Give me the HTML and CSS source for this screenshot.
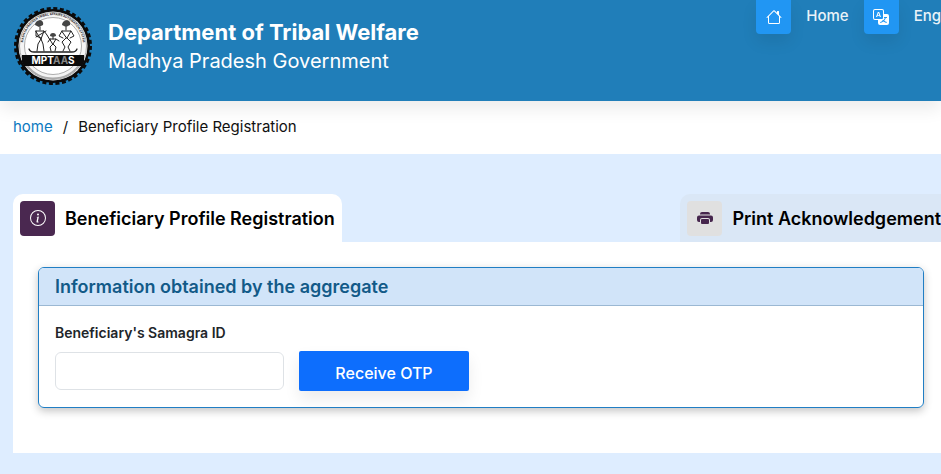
FILE: index.html
```html
<!DOCTYPE html>
<html lang="en">
<head>
<meta charset="utf-8">
<meta name="viewport" content="width=device-width, initial-scale=1">
<title>Beneficiary Profile Registration</title>
<link rel="stylesheet" href="styles.css">
</head>
<body>
<header class="site-header">
  <div class="brand">
    <svg class="logo" viewBox="0 0 80 80" role="img" aria-label="MPTAAS">
      <defs><path id="ring" d="M10.800 46A30 30 0 1 1 69.200 46"/></defs>
      <circle cx="40" cy="40" r="37" fill="#0b0b0b"/>
      <circle cx="40" cy="40" r="37.500" fill="none" stroke="#0b0b0b" stroke-width="3" stroke-dasharray="4 2.545"/>
      <circle cx="40" cy="40" r="34.500" fill="#f4f4f4"/>
      <circle cx="40" cy="40" r="33.500" fill="none" stroke="#777" stroke-width=".6"/>
      <circle cx="40" cy="40" r="28.500" fill="#fff" stroke="#999" stroke-width=".8"/>
      <path d="M14 59A32 32 0 0 0 66 59" fill="none" stroke="#aaa" stroke-width="1.500"/>
      <text class="logo-ring" text-anchor="middle"><textPath href="#ring" startOffset="50%">MADHYA PRADESH TRIBAL AFFAIRS AUTOMATION SYSTEM</textPath></text>
      <g fill="none" stroke="#222" stroke-width="1" stroke-linecap="round" stroke-linejoin="round">
        <path d="M16 43q1 3 5 3h38q4 0 5-3" stroke-width="1.300"/>
        <path d="M27 21v3M23 25l8 0-3 8zM23 25l0 5 5 2M31 25l3 4 3 5M28 33l-3 5-1 7M28 33l2 5 1 7M23 31l10-6"/>
        <path d="M53 21v3M49 25h9l-4 7zM49 25l-3 5 4 2M58 25l3 5-4 2M53 32l-4 4 3 5-2 4M54 32l4 4-3 5 2 4"/>
        <path d="M40 31v2M37 33h6l-3 5zM37 33l-2 3M43 33l3 2M40 38l-3 3 1 4M40 38l3 3-1 4"/>
      </g>
      <g fill="#444">
        <path d="M22 19q0-4 5-5 4 1 3 5l-4 2z"/>
        <path d="M49 19q0-4 5-5 4 1 3 5l-4 2z"/>
        <path d="M37 30q0-3 3-3t3 3l-3 1z"/>
      </g>
      <path d="M9 49h62v7l-2 4H11l-2-4z" fill="#0b0b0b"/>
      <text class="logo-name" x="40" y="58" text-anchor="middle">MPT<tspan fill="#858585">AA</tspan>S</text>
    </svg>
    <div class="brand-text">
      <h1 class="dept">Department of Tribal Welfare</h1>
      <p class="gov">Madhya Pradesh Government</p>
    </div>
  </div>
  <nav class="top-nav">
    <a class="nav-link" href="#">
      <span class="nav-icon"><svg class="icon" viewBox="0 0 16 16" aria-hidden="true"><path d="M8.707 1.500a1 1 0 0 0-1.414 0L.646 8.146a.5.5 0 0 0 .708.708L2 8.207V13.500A1.500 1.500 0 0 0 3.500 15h9a1.500 1.500 0 0 0 1.500-1.500V8.207l.646.647a.5.5 0 0 0 .708-.708L13 5.793V2.500a.5.5 0 0 0-.5-.5h-1a.5.5 0 0 0-.5.5v1.293zM13 7.207V13.500a.5.5 0 0 1-.5.5h-9a.5.5 0 0 1-.5-.5V7.207l5-5z"/></svg></span>
      Home
    </a>
    <a class="nav-link" href="#">
      <span class="nav-icon"><svg class="icon" viewBox="0 0 16 16" aria-hidden="true"><path d="M4.545 6.714 4.110 8H3l1.862-5h1.284L8 8H6.833l-.435-1.286zm1.634-.736L5.500 3.956h-.049l-.679 2.022z"/><path d="M0 2a2 2 0 0 1 2-2h7a2 2 0 0 1 2 2v3h3a2 2 0 0 1 2 2v7a2 2 0 0 1-2 2H7a2 2 0 0 1-2-2v-3H2a2 2 0 0 1-2-2zm2-1a1 1 0 0 0-1 1v7a1 1 0 0 0 1 1h7a1 1 0 0 0 1-1V2a1 1 0 0 0-1-1zm7.138 9.995q.289.451.63.846c-.748.575-1.673 1.001-2.768 1.292.178.217.451.635.555.867 1.125-.359 2.080-.844 2.886-1.494.777.665 1.739 1.165 2.930 1.472.133-.254.414-.673.629-.890-1.125-.253-2.057-.694-2.820-1.284.681-.747 1.222-1.651 1.621-2.757H14V8h-3v1.047h.765c-.318.844-.740 1.546-1.272 2.130a6 6 0 0 1-.415-.492 2 2 0 0 1-.940.310"/></svg></span>
      Eng
    </a>
  </nav>
</header>
<nav class="breadcrumb" aria-label="Breadcrumb">
  <a class="crumb-link" href="#">home</a>
  <span>/</span>
  <span>Beneficiary Profile Registration</span>
</nav>
<main class="content">
  <div class="tabs" role="tablist">
    <button class="tab tab-active" type="button" role="tab" aria-selected="true">
      <span class="tab-icon"><svg class="icon" viewBox="0 0 16 16" aria-hidden="true"><path d="M8 15A7 7 0 1 1 8 1a7 7 0 0 1 0 14m0 1A8 8 0 1 0 8 0a8 8 0 0 0 0 16"/><path d="m8.930 6.588-2.290.287-.082.380.450.083c.294.070.352.176.288.469l-.738 3.468c-.194.897.105 1.319.808 1.319.545 0 1.178-.252 1.465-.598l.088-.416c-.2.176-.492.246-.686.246-.275 0-.375-.193-.304-.533zM9 4.500a1 1 0 1 1-2 0 1 1 0 0 1 2 0"/></svg></span>
      Beneficiary Profile Registration
    </button>
    <button class="tab tab-end" type="button" role="tab" aria-selected="false">
      <span class="tab-icon"><svg class="icon" viewBox="0 0 16 16" aria-hidden="true"><path d="M5 2a2 2 0 0 0-2 2v.5h10V4a2 2 0 0 0-2-2zm6 7H5a1 1 0 0 0-1 1v3a1 1 0 0 0 1 1h6a1 1 0 0 0 1-1v-3a1 1 0 0 0-1-1"/><path d="M0 7.500a2 2 0 0 1 2-2h12a2 2 0 0 1 2 2V10a2 2 0 0 1-2 2h-1v-2a2 2 0 0 0-2-2H5a2 2 0 0 0-2 2v2H2a2 2 0 0 1-2-2z"/></svg></span>
      Print Acknowledgement
    </button>
  </div>
  <section class="panel">
    <form class="card">
      <h2 class="card-title">Information obtained by the aggregate</h2>
      <div class="card-body">
        <label class="label" for="samagra">Beneficiary's Samagra ID</label>
        <div class="field-row">
          <input class="input" id="samagra" type="text">
          <button class="submit" type="button">Receive OTP</button>
        </div>
      </div>
    </form>
  </section>
</main>
</body>
</html>
```

FILE: styles.css
```css
* {
  box-sizing: border-box;
}

body {
  margin: 0;
  overflow-x: hidden;
  background: #deedff;
  color: #212529;
  font-family: Inter, "Liberation Sans", sans-serif;
}

h1,
h2,
p {
  margin: 0;
}

button,
input {
  font: inherit;
}

.icon {
  display: block;
  width: 16px;
  height: 16px;
  fill: currentColor;
}

.site-header {
  display: flex;
  justify-content: space-between;
  align-items: flex-start;
  padding-bottom: 15px;
  background: #207eb9;
  color: #fff;
  box-shadow: 0 8px 16px rgba(0, 0, 0, 0.08);
  position: relative;
}

.brand {
  display: flex;
  align-items: center;
  gap: 15px;
  padding: 6px 0 0 13px;
}

.logo {
  width: 80px;
  height: 80px;
}

.logo-ring {
  font-size: 3px;
  font-weight: 700;
  fill: #222;
}

.logo-name {
  font-size: 10px;
  font-weight: 700;
  fill: #fff;
}

.dept {
  font-size: 22px;
  font-weight: 700;
  line-height: 29px;
}

.gov {
  font-size: 20px;
  line-height: 28px;
}

.top-nav {
  display: flex;
  gap: 15px;
}

.nav-link {
  display: flex;
  gap: 15px;
  color: #e9f2f8;
  font-size: 15px;
  font-weight: 500;
  line-height: 32px;
  text-decoration: none;
}

.nav-icon {
  display: grid;
  place-items: center;
  width: 35px;
  height: 34px;
  border-radius: 0 0 4px 4px;
  background: #2196f3;
  color: #fff;
  box-shadow: 0 8px 16px rgba(0, 0, 0, 0.08);
}

.breadcrumb {
  display: flex;
  gap: 10px;
  padding: 14px 13px 15px;
  background: #fff;
  color: #111;
  font-size: 15px;
  line-height: 24px;
}

.crumb-link {
  color: #0d7abf;
  text-decoration: none;
}

.content {
  padding: 40px 0 21px 13px;
}

.tabs {
  display: flex;
  justify-content: space-between;
}

.tab {
  display: flex;
  align-items: center;
  gap: 10px;
  height: 48px;
  padding: 0 7px;
  border: 0;
  border-radius: 10px 10px 0 0;
  background: #dae7f6;
  color: #000;
  font-size: 18px;
  font-weight: 600;
  white-space: nowrap;
}

.tab-active {
  background: #fff;
}

.tab-end {
  padding-right: 0;
  border-top-right-radius: 0;
}

.tab-icon {
  display: grid;
  place-items: center;
  width: 35px;
  height: 35px;
  border-radius: 4px;
  background: #e0e0e0;
  color: #46264d;
}

.tab-active .tab-icon {
  background: #4a2850;
  color: #fff;
}

.panel {
  padding: 25px 17px 45px 25px;
  background: #fff;
}

.card {
  border: 1px solid #207ec4;
  border-radius: 6px;
  box-shadow: 0 3px 8px rgba(0, 0, 0, 0.24);
  overflow: hidden;
}

.card-title {
  padding: 5px 16px;
  border-bottom: 1px solid #9bb8d3;
  background: #d1e4f9;
  color: #125a88;
  font-size: 18px;
  font-weight: 600;
  line-height: 27px;
}

.card-body {
  display: flex;
  flex-direction: column;
  gap: 8px;
  padding: 16px;
}

.field-row {
  display: flex;
  align-items: center;
  gap: 15px;
}

.label {
  font-size: 14px;
  font-weight: 600;
  line-height: 21px;
}

.input {
  width: 229px;
  height: 38px;
  padding: 6px 12px;
  border: 1px solid #dee2e6;
  border-radius: 6px;
  background: #fff;
}

.submit {
  width: 170px;
  height: 40px;
  padding: 4px 0 0;
  border: 0;
  border-radius: 2px;
  background: #0d6efd;
  color: #fff;
  font-size: 16px;
  font-weight: 500;
  box-shadow: 0 8px 16px rgba(0, 0, 0, 0.08);
}
```
